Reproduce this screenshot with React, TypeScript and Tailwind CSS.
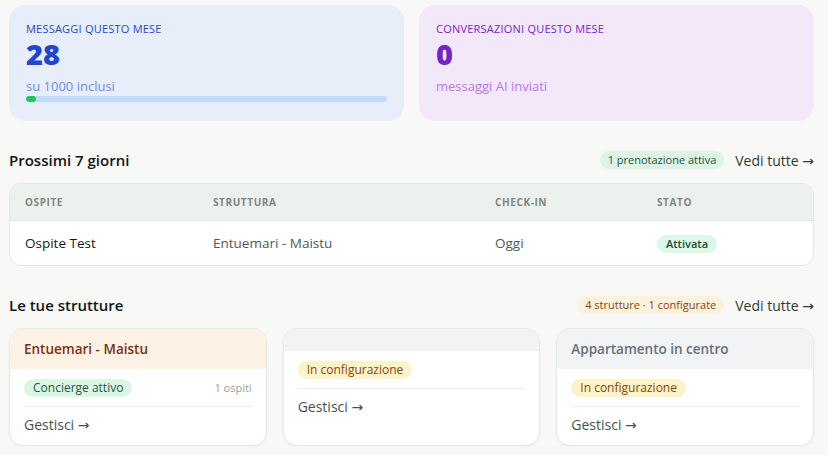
const font = { fontFamily: '"Open Sans", "DejaVu Sans", sans-serif' };

function StatCard({
  label,
  value,
  sub,
  tone,
  progress,
}: {
  label: string;
  value: string;
  sub: string;
  tone: 'blue' | 'purple';
  progress?: number;
}) {
  const blue = tone === 'blue';
  return (
    <div className={`rounded-2xl px-[17px] pt-[16px] h-[116px] ${blue ? 'bg-[#e8eef9]' : 'bg-[#f3e8f9]'}`}>
      <div className={`text-[11px] font-medium uppercase leading-4 tracking-[0.02em] ${blue ? 'text-[#2748c9]' : 'text-[#7a24c8]'}`}>{label}</div>
      <div className={`text-[29px] font-extrabold leading-8 mt-[1px] ${blue ? 'text-[#1f45d3]' : 'text-[#7423c9]'}`}>{value}</div>
      <div className={`text-[13px] leading-5 mt-[6px] ${blue ? 'text-[#6f8ce3]' : 'text-[#b57ae6]'}`}>{sub}</div>
      {progress !== undefined && (
        <div className="h-[6px] rounded-full bg-[#c3dafc] overflow-hidden">
          <div className="h-full rounded-full bg-[#22c55e]" style={{ width: `${Math.max(progress, 2.8)}%` }} />
        </div>
      )}
    </div>
  );
}

function SectionHeader({ title, badge, badgeClass }: { title: string; badge: string; badgeClass: string }) {
  return (
    <div className="flex items-center justify-between h-[24px]">
      <h2 className="text-[15px] font-semibold text-[#111418]">{title}</h2>
      <div className="flex items-center gap-[11px]">
        <span className={`rounded-full px-[8px] h-[18px] flex items-center text-[11px] ${badgeClass}`}>{badge}</span>
        <a className="text-[14px] text-[#2f3a36]">Vedi tutte →</a>
      </div>
    </div>
  );
}

function StructureCard({
  name,
  headerClass,
  titleClass,
  badge,
  badgeClass,
  guests,
}: {
  name?: string;
  headerClass: string;
  titleClass?: string;
  badge: string;
  badgeClass: string;
  guests?: string;
}) {
  return (
    <div className="rounded-[14px] border border-[#e2ebe6] bg-white overflow-hidden shadow-[0_1px_3px_rgba(0,0,0,0.04)] flex flex-col">
      <div className={`${headerClass} ${name ? 'h-[40px]' : 'h-[22px]'} px-[14px] flex items-center`}>
        {name && <span className={`text-[13.5px] font-semibold ${titleClass}`}>{name}</span>}
      </div>
      <div className="px-[14px] pt-[10px] pb-[10px]">
        <div className="flex items-center justify-between h-[18px]">
          <span className={`rounded-full px-[9px] h-[18px] flex items-center text-[12px] ${badgeClass}`}>{badge}</span>
          {guests && <span className="text-[11px] text-[#9aa19e]">{guests}</span>}
        </div>
        <div className="h-px bg-[#ebefed] mt-[9px]" />
        <div className="text-[14px] text-[#46524d] mt-[8px] leading-5">Gestisci →</div>
      </div>
    </div>
  );
}

export default function App() {
  return (
    <div className="min-h-screen bg-[#f8f8f6] pl-[9px] pr-[14px] pt-[5px] pb-[10px]" style={font}>
      <div className="grid grid-cols-2 gap-[15px]">
        <StatCard label="Messaggi questo mese" value="28" sub="su 1000 inclusi" tone="blue" progress={2.8} />
        <StatCard label="Conversazioni questo mese" value="0" sub="messaggi AI inviati" tone="purple" />
      </div>

      <section className="mt-[27px]">
        <SectionHeader title="Prossimi 7 giorni" badge="1 prenotazione attiva" badgeClass="bg-[#dcf3e6] text-[#24543c]" />
        <div className="mt-[11px] rounded-[12px] border border-[#e0e8e3] bg-white overflow-hidden">
          <div className="grid grid-cols-[188px_282px_162px_1fr] bg-[#edf1ed] h-[37px] items-center border-b border-[#e0e8e3] text-[10px] font-bold tracking-[0.06em] text-[#7d8781]">
            <div className="px-[15px]">OSPITE</div>
            <div className="px-[15px]">STRUTTURA</div>
            <div className="px-[15px]">CHECK-IN</div>
            <div className="px-[15px]">STATO</div>
          </div>
          <div className="grid grid-cols-[188px_282px_162px_1fr] h-[44px] items-center text-[13.5px]">
            <div className="px-[15px] font-medium text-[#15191c]">Ospite Test</div>
            <div className="px-[15px] text-[#4d5a56]">Entuemari - Maistu</div>
            <div className="px-[15px] text-[#4d5a56]">Oggi</div>
            <div className="px-[15px]">
              <span className="inline-flex items-center rounded-full bg-[#dcf8e8] text-[#1f4d36] font-semibold text-[11px] px-[9px] h-[18px]">Attivata</span>
            </div>
          </div>
        </div>
      </section>

      <section className="mt-[27px]">
        <SectionHeader title="Le tue strutture" badge="4 strutture · 1 configurate" badgeClass="bg-[#fcf1dd] text-[#8a4512]" />
        <div className="mt-[11px] grid grid-cols-3 gap-[16px]">
          <StructureCard
            name="Entuemari - Maistu"
            headerClass="bg-[#fdf2e3]"
            titleClass="text-[#7a3210]"
            badge="Concierge attivo"
            badgeClass="bg-[#dcf6e6] text-[#225a3e]"
            guests="1 ospiti"
          />
          <StructureCard headerClass="bg-[#f1f3f5]" badge="In configurazione" badgeClass="bg-[#fdf3c8] text-[#8a4512]" />
          <StructureCard
            name="Appartamento in centro"
            headerClass="bg-[#f1f3f5]"
            titleClass="text-[#68707a]"
            badge="In configurazione"
            badgeClass="bg-[#fdf3c8] text-[#8a4512]"
          />
        </div>
      </section>
    </div>
  );
}
